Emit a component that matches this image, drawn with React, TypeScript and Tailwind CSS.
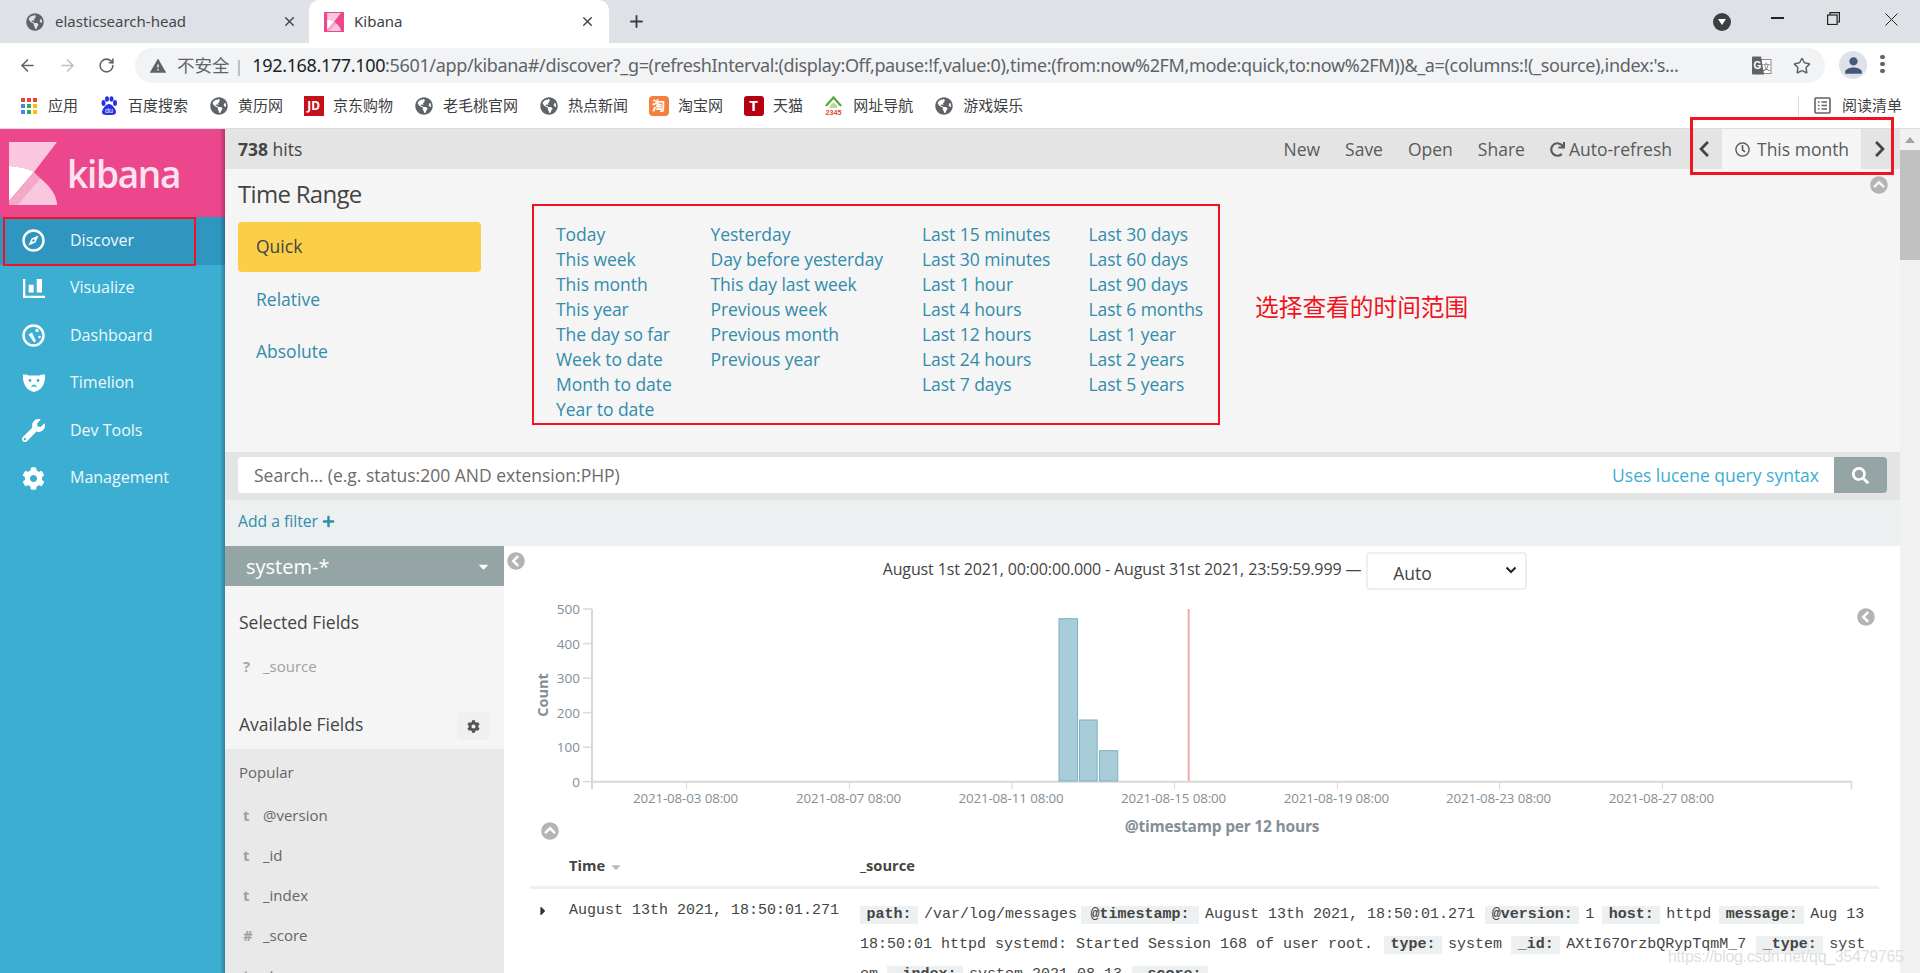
import React from "react";
import { FaGlobeAmericas, FaCog, FaWrench, FaSearch, FaPlus, FaCaretDown, FaCaretRight, FaChevronCircleLeft, FaChevronCircleUp, FaChevronLeft, FaChevronRight, FaRegClock, FaRedo } from "react-icons/fa";
import { MdWarning, MdPerson } from "react-icons/md";
import { ArrowLeft, ArrowRight, RotateCw, Star, X, Plus } from "lucide-react";

const cjk = "font-['Noto_Sans','Noto_Sans_CJK_SC',sans-serif]";

function KLogo({ w, h }: { w: number; h: number }) {
  return (
    <svg width={w} height={h} viewBox="0 0 48 63" className="shrink-0">
      <path d="M0 0H48L25 30Q13 25 0 24Z" fill="#fbc7de" />
      <path d="M0 24Q15 25 25 30L0 59Z" fill="#ffffff" />
      <path d="M25 30L31 36L8 63H0V59Z" fill="#f5a9c9" />
      <path d="M8 63L31 36Q48 50 48 63Z" fill="#fbc7de" />
    </svg>
  );
}

function TabLogo() {
  return (
    <div className="flex h-[20px] w-[20px] shrink-0 items-center justify-center bg-[#ec478c]">
      <KLogo w={14} h={18} />
    </div>
  );
}

function Globe() {
  return <FaGlobeAmericas className="text-[18px] text-[#5f6368]" />;
}

function Bookmark({ icon, label }: { icon: React.ReactNode; label: string }) {
  return (
    <div className="flex items-center gap-[10px]">
      <div className="flex w-[19px] items-center justify-center">{icon}</div>
      <span className="text-[15px] text-[#3c4043]">{label}</span>
    </div>
  );
}

function AppsIcon() {
  const colors = ["#ea4335", "#ea4335", "#ea4335", "#4285f4", "#34a853", "#fbbc05", "#4285f4", "#34a853", "#fbbc05"];
  return (
    <div className="grid grid-cols-3 gap-[2px]">
      {colors.map((c, i) => (
        <div key={i} className="h-[4px] w-[4px]" style={{ background: c }} />
      ))}
    </div>
  );
}

function Chrome() {
  return (
    <div className={`shrink-0 ${cjk}`}>
      <div className="flex h-[43px] items-end bg-[#dee1e6]">
        <div className="flex h-full w-[309px] items-center pl-[26px]">
          <Globe />
          <span className="ml-[11px] w-[230px] text-[15px] text-[#45484c]">elasticsearch-head</span>
          <X size={15} strokeWidth={2.4} className="-ml-[3px] text-[#45484c]" />
        </div>
        <div className="flex h-full w-[300px] items-center rounded-t-[10px] bg-white pl-[15px]">
          <TabLogo />
          <span className="ml-[10px] w-[226px] text-[15px] text-[#3c4043]">Kibana</span>
          <X size={15} strokeWidth={2.4} className="text-[#45484c]" />
        </div>
        <Plus size={19} strokeWidth={2.4} className="mb-[12px] ml-[18px] text-[#3c4043]" />
        <div className="ml-auto flex h-full items-center">
          <div className="mr-[40px] flex h-[18px] w-[18px] items-center justify-center rounded-full bg-[#3c4043]">
            <div className="mt-[1px] h-0 w-0 border-x-[4px] border-t-[6px] border-x-transparent border-t-white" />
          </div>
          <div className="mb-[7px] mr-[43px] h-[1.500px] w-[13px] bg-[#222]" />
          <svg width="13" height="13" viewBox="0 0 13 13" fill="none" stroke="#222" strokeWidth="1.200" className="mb-[6px] mr-[45px]">
            <rect x="0.600" y="3" width="9.500" height="9.500" />
            <path d="M3 3V0.600H12.400V10H10" />
          </svg>
          <svg width="13" height="13" viewBox="0 0 13 13" fill="none" stroke="#222" strokeWidth="1" className="mb-[5px] mr-[22px]">
            <path d="M0.500 0.500L12.500 12.500M12.500 0.500L0.500 12.500" />
          </svg>
        </div>
      </div>
      <div className="flex h-[40px] items-end bg-white">
        <div className="flex h-[35px] w-[135px] items-center gap-[22px] pl-[18px]">
          <ArrowLeft size={19} className="text-[#5f6368]" strokeWidth={2} />
          <ArrowRight size={19} className="-ml-[1px] text-[#bcbfc4]" strokeWidth={2} />
          <RotateCw size={17} className="-ml-[1px] text-[#5f6368]" strokeWidth={2.2} />
        </div>
        <div className="flex h-[35px] w-[1690px] items-center rounded-full bg-[#f1f3f4] pl-[14px] pr-[14px]">
          <MdWarning className="shrink-0 text-[18px] text-[#5f6368]" />
          <span className="ml-[10px] shrink-0 text-[17.500px] text-[#5f6368]">不安全</span>
          <span className="ml-[5px] shrink-0 text-[16px] text-[#9aa0a6]">|</span>
          <span className="ml-[9px] w-[1478px] shrink-0 whitespace-nowrap text-[18px] tracking-[-0.35px] text-[#5f6368]">
            <span className="text-[#202124]">192.168.177.100</span>:5601/app/kibana#/discover?_g=(refreshInterval:(display:Off,pause:!f,value:0),time:(from:now%2FM,mode:quick,to:now%2FM))&amp;_a=(columns:!(_source),index:'s...
          </span>
          <svg width="20" height="19" viewBox="0 0 20 19" className="ml-auto shrink-0" fontFamily="Liberation Sans">
            <rect x="9" y="3.500" width="10" height="14" fill="#fff" stroke="#8a8d91" />
            <text x="14" y="14" textAnchor="middle" fontSize="9" fill="#5f6368">文</text>
            <path d="M0 1.500Q0 0.500 1 0.500H9L12 18.500H1Q0 18.500 0 17.500Z" fill="#5f6368" />
            <text x="5.500" y="12.500" textAnchor="middle" fontSize="10" fontWeight="700" fill="#fff">G</text>
          </svg>
          <Star size={18} strokeWidth={2} className="ml-[21px] shrink-0 text-[#5f6368]" />
        </div>
        <div className="mb-[1px] ml-[14px] mt-[5px] flex h-[28px] w-[28px] items-center justify-center self-center rounded-full bg-[#dee1e6]">
          <MdPerson className="text-[25px] text-[#44587a]" />
        </div>
        <div className="mb-[10px] ml-[13px] flex flex-col gap-[2.500px]">
          <div className="h-[4.500px] w-[4.500px] rounded-full bg-[#5f6368]" />
          <div className="h-[4.500px] w-[4.500px] rounded-full bg-[#5f6368]" />
          <div className="h-[4.500px] w-[4.500px] rounded-full bg-[#5f6368]" />
        </div>
      </div>
      <div className="flex h-[46px] items-center gap-[21px] border-b border-[#dadce0] bg-white pl-[19px]">
        <Bookmark icon={<AppsIcon />} label="应用" />
        <Bookmark
          icon={
            <svg width="18" height="20" viewBox="0 0 18 20">
              <g fill="#2932e1">
                <ellipse cx="3.500" cy="7" rx="2" ry="3" />
                <ellipse cx="7" cy="3" rx="2" ry="2.800" />
                <ellipse cx="11.500" cy="3" rx="2" ry="2.800" />
                <ellipse cx="15" cy="7" rx="2" ry="3" />
                <path d="M9 8c3 0 7 5 7 8s-3 3-7 3-7 0-7-3 4-8 7-8Z" />
              </g>
              <text x="9" y="17" textAnchor="middle" fontSize="7" fill="#fff" fontFamily="Liberation Sans">du</text>
            </svg>
          }
          label="百度搜索"
        />
        <Bookmark icon={<Globe />} label="黄历网" />
        <Bookmark
          icon={<div className="flex h-[20px] w-[20px] shrink-0 items-center justify-center bg-[#c4111b] text-[12px] font-bold text-white">JD</div>}
          label="京东购物"
        />
        <Bookmark icon={<Globe />} label="老毛桃官网" />
        <Bookmark icon={<Globe />} label="热点新闻" />
        <Bookmark
          icon={<div className="flex h-[20px] w-[20px] shrink-0 items-center justify-center rounded-[4px] bg-[#f5803e] text-[13px] font-bold leading-none text-white">淘</div>}
          label="淘宝网"
        />
        <Bookmark
          icon={<div className="flex h-[20px] w-[20px] shrink-0 items-center justify-center rounded-[3px] bg-[#b5000f] text-[15px] font-bold text-white">T</div>}
          label="天猫"
        />
        <Bookmark
          icon={
            <svg width="20" height="20" viewBox="0 0 20 20">
              <path d="M2 10L10 1L18 10" fill="none" stroke="#5fa83c" strokeWidth="2.400" />
              <path d="M6 10L10 6L14 10V12H6Z" fill="#b5d8a0" />
              <text x="10" y="19" textAnchor="middle" fontSize="7.500" fontWeight="700" fill="#d9482b" fontFamily="Liberation Sans">2345</text>
            </svg>
          }
          label="网址导航"
        />
        <Bookmark icon={<Globe />} label="游戏娱乐" />
        <div className="ml-auto flex h-[20px] items-center gap-[11px] border-l border-[#dadce0] pl-[15px] pr-[18px]">
          <svg width="17" height="17" viewBox="0 0 17 17" fill="none" stroke="#5f6368" strokeWidth="1.600">
            <rect x="1" y="1" width="15" height="15" rx="1" />
            <path d="M4 5h1.500M7.500 5h5.500M4 8.500h1.500M7.500 8.500h5.500M4 12h1.500M7.500 12h5.500" />
          </svg>
          <span className="text-[15px] text-[#3c4043]">阅读清单</span>
        </div>
      </div>
    </div>
  );
}

function NavIcon({ name }: { name: string }) {
  if (name === "Discover")
    return (
      <svg width="23" height="23" viewBox="0 0 23 23">
        <circle cx="11.500" cy="11.500" r="10" fill="none" stroke="#fff" strokeWidth="2.400" />
        <path d="M16.500 6.500L13.500 13.500L6.500 16.500L9.500 9.500Z" fill="#fff" />
        <circle cx="11.500" cy="11.500" r="1.200" fill="#2f96bf" />
      </svg>
    );
  if (name === "Visualize")
    return (
      <svg width="22" height="19" viewBox="0 0 22 19" fill="#fff">
        <path d="M0 0h2.300v16.700H22V19H0Z" />
        <rect x="5.700" y="5.700" width="5" height="7.800" />
        <rect x="13.700" y="0" width="5.300" height="13.500" />
      </svg>
    );
  if (name === "Dashboard")
    return (
      <svg width="23" height="23" viewBox="0 0 23 23">
        <circle cx="11.500" cy="11.500" r="10" fill="none" stroke="#fff" strokeWidth="2.400" />
        <path d="M6.500 10.500L10 8.500L14 17L12 18.500Z" fill="#fff" />
        <circle cx="15" cy="6.500" r="1.700" fill="#fff" />
        <circle cx="17.500" cy="13" r="1.300" fill="#fff" />
      </svg>
    );
  if (name === "Timelion")
    return (
      <svg width="22" height="18" viewBox="0 0 22 18">
        <path d="M0 0.500Q4 0 5.500 1.500H16.500Q18 0 22 0.500Q22.500 5 21 9Q19.500 15.500 11 18Q2.500 15.500 1 9Q-0.500 5 0 0.500Z" fill="#fff" />
        <circle cx="7" cy="6.500" r="1.400" fill="#3caed2" />
        <circle cx="15" cy="6.500" r="1.400" fill="#3caed2" />
        <path d="M7.500 13.500Q11 7.500 14.500 13.500Q11 11.500 7.500 13.500Z" fill="#3caed2" />
      </svg>
    );
  if (name === "Dev Tools") return <FaWrench className="text-[23px]" />;
  return <FaCog className="text-[23px]" />;
}

function Sidebar() {
  const items = ["Discover", "Visualize", "Dashboard", "Timelion", "Dev Tools", "Management"];
  return (
    <div className="relative flex w-[225px] shrink-0 flex-col bg-[#3caed2]">
      <div className="flex h-[88px] items-start bg-[#ec478c] pl-[9px] pt-[13px]">
        <KLogo w={48} h={63} />
        <span className="ml-[10px] mt-[8px] text-[37px] font-semibold leading-[48px] tracking-[-1.300px] text-[#fde3ee]">kibana</span>
      </div>
      {items.map((n, i) => (
        <div key={n} className={`flex h-[47.500px] items-center pl-[22px] text-[#eef9fc] ${i === 0 ? "bg-[#2f96bf]" : ""}`}>
          <div className="flex w-[23px] justify-center text-white"><NavIcon name={n} /></div>
          <span className="mb-[2px] ml-[25px] text-[16px]">{n}</span>
        </div>
      ))}
      <div className="absolute bottom-0 right-0 top-0 w-[5px] bg-gradient-to-l from-black/25 to-transparent" />
    </div>
  );
}

function TopBar() {
  return (
    <div className="flex h-[40px] items-center bg-[#e4e4e4] pl-[13px] text-[17.500px] text-[#5a5a5a]">
      <span className="pt-[1px] text-[#444]"><b className="font-bold">738</b> hits</span>
      <div className="ml-auto flex h-full items-center">
        <span className="pt-[1px]">New</span>
        <span className="ml-[25px] pt-[1px]">Save</span>
        <span className="ml-[25px] pt-[1px]">Open</span>
        <span className="ml-[25px] pt-[1px]">Share</span>
        <FaRedo className="ml-[25px] text-[15px]" />
        <span className="ml-[4px] pt-[1px]">Auto-refresh</span>
        <FaChevronLeft className="ml-[23px] text-[18px] text-[#444]" />
        <div className="ml-[9px] flex h-full w-[139px] items-center bg-[#f5f5f5] pl-[13px]">
          <FaRegClock className="text-[15px]" />
          <span className="ml-[7px] pt-[1px]">This month</span>
        </div>
        <FaChevronRight className="ml-[10px] mr-[11px] text-[18px] text-[#444]" />
      </div>
    </div>
  );
}

const quick = [
  ["Today", "This week", "This month", "This year", "The day so far", "Week to date", "Month to date", "Year to date"],
  ["Yesterday", "Day before yesterday", "This day last week", "Previous week", "Previous month", "Previous year"],
  ["Last 15 minutes", "Last 30 minutes", "Last 1 hour", "Last 4 hours", "Last 12 hours", "Last 24 hours", "Last 7 days"],
  ["Last 30 days", "Last 60 days", "Last 90 days", "Last 6 months", "Last 1 year", "Last 2 years", "Last 5 years"],
];
const quickW = ["w-[154.500px]", "w-[211.500px]", "w-[166.500px]", "w-[150px]"];

function TimePanel() {
  return (
    <div className="flex h-[283px] bg-[#f5f5f5] pl-[13px]">
      <div className="w-[243px] shrink-0">
        <div className="mt-[9px] text-[24px] leading-[32px] tracking-[-0.7px] text-[#444]">Time Range</div>
        <div className="mt-[12px] flex h-[50px] items-center rounded-[4px] bg-[#fbce47] pb-[2px] pl-[18px] text-[17.500px] text-[#444]">Quick</div>
        <div className="mt-[14px] pl-[18px] text-[17.500px] leading-[26px] text-[#328caa]">Relative</div>
        <div className="mt-[26px] pl-[18px] text-[17.500px] leading-[26px] text-[#328caa]">Absolute</div>
      </div>
      <div className="ml-[75px] flex pt-[52.500px]">
        {quick.map((col, i) => (
          <div key={i} className={quickW[i]}>
            {col.map((t) => (
              <div key={t} className="h-[25px] text-[17.500px] leading-[25px] tracking-[-0.05px] text-[#328caa]">{t}</div>
            ))}
          </div>
        ))}
      </div>
    </div>
  );
}

function SearchBar() {
  return (
    <div className="flex h-[48px] items-start bg-[#e4e4e4] pl-[13px] pr-[13px] pt-[5px]">
      <div className="flex h-[36px] flex-1 items-center rounded-l-[4px] bg-white pl-[16px] pr-[15px] text-[17.500px]">
        <span className="text-[#6b6b6b]">Search... (e.g. status:200 AND extension:PHP)</span>
        <span className="ml-auto text-[#3caed2]">Uses lucene query syntax</span>
      </div>
      <div className="flex h-[36px] w-[53px] items-center justify-center rounded-r-[4px] bg-[#95a5a6]">
        <FaSearch className="text-[17px] text-white" />
      </div>
    </div>
  );
}

function Field({ t, n }: { t: string; n: string }) {
  return (
    <div className="flex h-[40px] items-center text-[15px]">
      <span className="w-[24px] pl-[4px] font-bold text-[#a0a0a0]">{t}</span>
      <span className="text-[#666]">{n}</span>
    </div>
  );
}

function FieldList() {
  return (
    <div className="w-[279px] shrink-0 bg-[#f5f5f5]">
      <div className="flex h-[40px] items-center justify-between bg-[#95a5a6] pl-[21px] pr-[13px] text-white">
        <span className="pt-[2px] text-[20px]">system-*</span>
        <FaCaretDown className="text-[15px]" />
      </div>
      <div className="h-[163px] pl-[14px]">
        <div className="pt-[23px] text-[17.500px] leading-[26px] text-[#444]">Selected Fields</div>
        <div className="mt-[21px] flex text-[15px] leading-[20px]">
          <span className="w-[24px] pl-[4px] font-bold text-[#a8a8a8]">?</span>
          <span className="text-[#a0a0a0]">_source</span>
        </div>
        <div className="mt-[35px] flex items-start justify-between pr-[14px] text-[17.500px] leading-[26px] text-[#444]">
          <span>Available Fields</span>
          <div className="mt-[1px] flex h-[28px] w-[33px] items-center justify-center rounded-[4px] bg-[#f0f0f0]">
            <FaCog className="text-[13px] text-[#555]" />
          </div>
        </div>
      </div>
      <div className="h-[300px] bg-[#e9e9e9] pl-[14px]">
        <div className="pt-[11px] text-[15px] leading-[24px] text-[#666]">Popular</div>
        <div className="mt-[11px]">
          <Field t="t" n="@version" />
          <Field t="t" n="_id" />
          <Field t="t" n="_index" />
          <Field t="#" n="_score" />
          <Field t="t" n="_type" />
        </div>
      </div>
    </div>
  );
}

function Chart() {
  const ox = 88, y = (v: number) => 181.7 - v * 0.3454;
  const ticks = [
    [182.5, "2021-08-03 08:00"], [345.5, "2021-08-07 08:00"], [508, "2021-08-11 08:00"], [670.5, "2021-08-15 08:00"],
    [833.4, "2021-08-19 08:00"], [995.5, "2021-08-23 08:00"], [1158.4, "2021-08-27 08:00"],
  ] as const;
  return (
    <svg width="1396" height="245" viewBox="0 0 1396 245" className="block" fontFamily="Open Sans">
      {[0, 100, 200, 300, 400, 500].map((v) => (
        <g key={v}>
          <line x1="79" x2={ox} y1={y(v)} y2={y(v)} stroke="#d8d8d8" strokeWidth="1.500" />
          <text x="76" y={y(v) + 5} textAnchor="end" fontSize="13.500" fill="#848e96">{v}</text>
        </g>
      ))}
      <line x1={ox} x2={ox} y1="9" y2="189" stroke="#d8d8d8" strokeWidth="2" />
      <line x1={ox} x2="1348" y1="181.700" y2="181.700" stroke="#d8d8d8" strokeWidth="2" />
      <line x1="1347.500" x2="1347.500" y1="181" y2="189" stroke="#d8d8d8" strokeWidth="1.500" />
      {ticks.map(([x, t]) => (
        <g key={t}>
          <line x1={x} x2={x} y1="181" y2="189" stroke="#d8d8d8" />
          <text x={x - 1} y="202.500" textAnchor="middle" fontSize="13.300" fill="#848e96" letterSpacing="-0.1">{t}</text>
        </g>
      ))}
      {[[555, 18.5, 162.3], [575.5, 17.7, 61], [595.5, 18.3, 30.3]].map(([x, w, h], i) => (
        <rect key={i} x={x} y={181 - h} width={w} height={h} fill="#a8cdd9" stroke="#77b2c6" strokeWidth="1" />
      ))}
      <line x1="684.700" x2="684.700" y1="9" y2="181" stroke="#f3a9ab" strokeWidth="2" />
      <text transform="translate(44,95) rotate(-90)" textAnchor="middle" fontSize="14.500" fontWeight="700" fill="#848e96">Count</text>
      <text x="718" y="232" textAnchor="middle" fontSize="15.500" fontWeight="700" fill="#848e96" letterSpacing="-0.2">@timestamp per 12 hours</text>
    </svg>
  );
}

function Chip({ children, wide = false }: { children: React.ReactNode; wide?: boolean }) {
  return <b className={`mr-[6px] inline-block h-[18px] bg-[#ecf0f1] font-bold leading-[18px] text-[#444] ${wide ? "px-[9.500px]" : "px-[6.500px]"}`}>{children}</b>;
}

function Val({ children, r = 6 }: { children: React.ReactNode; r?: number }) {
  return <span style={{ marginRight: r }}>{children}</span>;
}

function Results() {
  return (
    <div className="relative flex-1 overflow-hidden bg-white">
      <div className="flex h-[54px] items-start justify-center pl-[6px] pt-[6px]">
        <span className="mt-[6px] text-[16px] leading-[22px] tracking-[-0.14px] text-[#444]">August 1st 2021, 00:00:00.000 - August 31st 2021, 23:59:59.999 —</span>
        <div className="ml-[5px] flex h-[38px] w-[161px] items-center justify-between rounded-[4px] border-2 border-[#ecf0f1] pl-[25px] pr-[8px]">
          <span className="mt-[5px] text-[17.500px] text-[#444]">Auto</span>
          <svg width="12" height="8" viewBox="0 0 12 8" className="-mt-[3px]" fill="none" stroke="#222" strokeWidth="2"><path d="M1.500 1.500L6 6L10.500 1.500" /></svg>
        </div>
      </div>
      <Chart />
      <div className="ml-[26px] mr-[21px] flex h-[44px] items-center border-b-[3px] border-[#ecf0f1] text-[14.700px] font-bold text-[#444]">
        <span className="ml-[39px] flex w-[291px] items-center gap-[4px]">Time <FaCaretDown className="mt-[3px] text-[14px] text-[#b5bcc0]" /></span>
        <span>_source</span>
      </div>
      <div className="flex pt-[14px] font-['Liberation_Mono',monospace] text-[15px] text-[#444]">
        <FaCaretRight className="ml-[32px] mt-[1px] text-[14px] text-[#333]" />
        <span className="ml-[19px] w-[291px] whitespace-nowrap leading-[16px]">August 13th 2021, 18:50:01.271</span>
        <div className="-mt-[3px] whitespace-nowrap leading-[30px]">
          <div className="h-[30px]">
            <Chip>path:</Chip><Val r={4}>/var/log/messages</Val>
            <Chip wide>@timestamp:</Chip><Val r={10}>August 13th 2021, 18:50:01.271</Val>
            <Chip>@version:</Chip><Val r={8}>1</Val>
            <Chip>host:</Chip><Val r={8}>httpd</Val>
            <Chip>message:</Chip><Val>Aug 13</Val>
          </div>
          <div className="h-[30px]">
            <Val r={11}>18:50:01 httpd systemd: Started Session 168 of user root.</Val>
            <Chip>type:</Chip><Val r={9}>system</Val>
            <Chip>_id:</Chip><Val r={10}>AXtI67OrzbQRypTqmM_7</Val>
            <Chip>_type:</Chip><Val>syst</Val>
          </div>
          <div className="h-[30px]">
            <Val r={9}>em</Val>
            <Chip>_index:</Chip><Val r={10}>system-2021.08.13</Val>
            <Chip>_score:</Chip>
          </div>
        </div>
      </div>
      <FaChevronCircleLeft className="absolute left-[3px] top-[6px] text-[18px] text-[#b4b4b4]" />
      <FaChevronCircleLeft className="absolute left-[1353px] top-[62px] text-[18px] text-[#b4b4b4]" />
      <FaChevronCircleUp className="absolute left-[37px] top-[276px] text-[18px] text-[#b4b4b4]" />
    </div>
  );
}

function Scrollbar() {
  return (
    <div className="w-[20px] shrink-0 bg-[#f1f1f1]">
      <div className="flex h-[21px] items-center justify-center">
        <div className="h-0 w-0 border-x-[5px] border-b-[6px] border-x-transparent border-b-[#a3a3a3]" />
      </div>
      <div className="h-[110px] bg-[#c1c1c1]" />
    </div>
  );
}

export default function App() {
  return (
    <div className="relative flex h-[973px] w-[1920px] flex-col overflow-hidden bg-white font-['Open_Sans',sans-serif]">
      <Chrome />
      <div className="flex min-h-0 flex-1">
        <Sidebar />
        <div className="flex min-w-0 flex-1 flex-col">
          <TopBar />
          <TimePanel />
          <SearchBar />
          <div className="flex h-[46px] items-center gap-[4px] bg-[#ecf0f1] pb-[3px] pl-[13px] text-[15.700px] text-[#328caa]">
            Add a filter <FaPlus className="text-[13px]" />
          </div>
          <div className="flex min-h-0 flex-1">
            <FieldList />
            <Results />
          </div>
        </div>
        <Scrollbar />
      </div>
      <FaChevronCircleUp className="absolute left-[1870px] top-[176px] text-[18px] text-[#b4b4b4]" />
      <div className="pointer-events-none absolute left-[1690px] top-[117px] h-[58px] w-[204px] border-[3px] border-[#f01320]" />
      <div className="pointer-events-none absolute left-[3px] top-[217px] h-[49px] w-[193px] border-[2.500px] border-[#f01320]" />
      <div className="pointer-events-none absolute left-[532px] top-[204px] h-[221px] w-[688px] border-[2.500px] border-[#f01320]" />
      <div className="absolute left-[1255px] top-[289px] font-['Noto_Sans_CJK_SC',sans-serif] text-[23.700px] leading-[34px] text-[#f01320]">选择查看的时间范围</div>
      <div className="absolute left-[1668px] top-[945px] font-['Liberation_Sans',sans-serif] text-[16px] tracking-[-0.3px] text-[#d0d0d0]/70">https://blog.csdn.net/qq_35479765</div>
    </div>
  );
}
